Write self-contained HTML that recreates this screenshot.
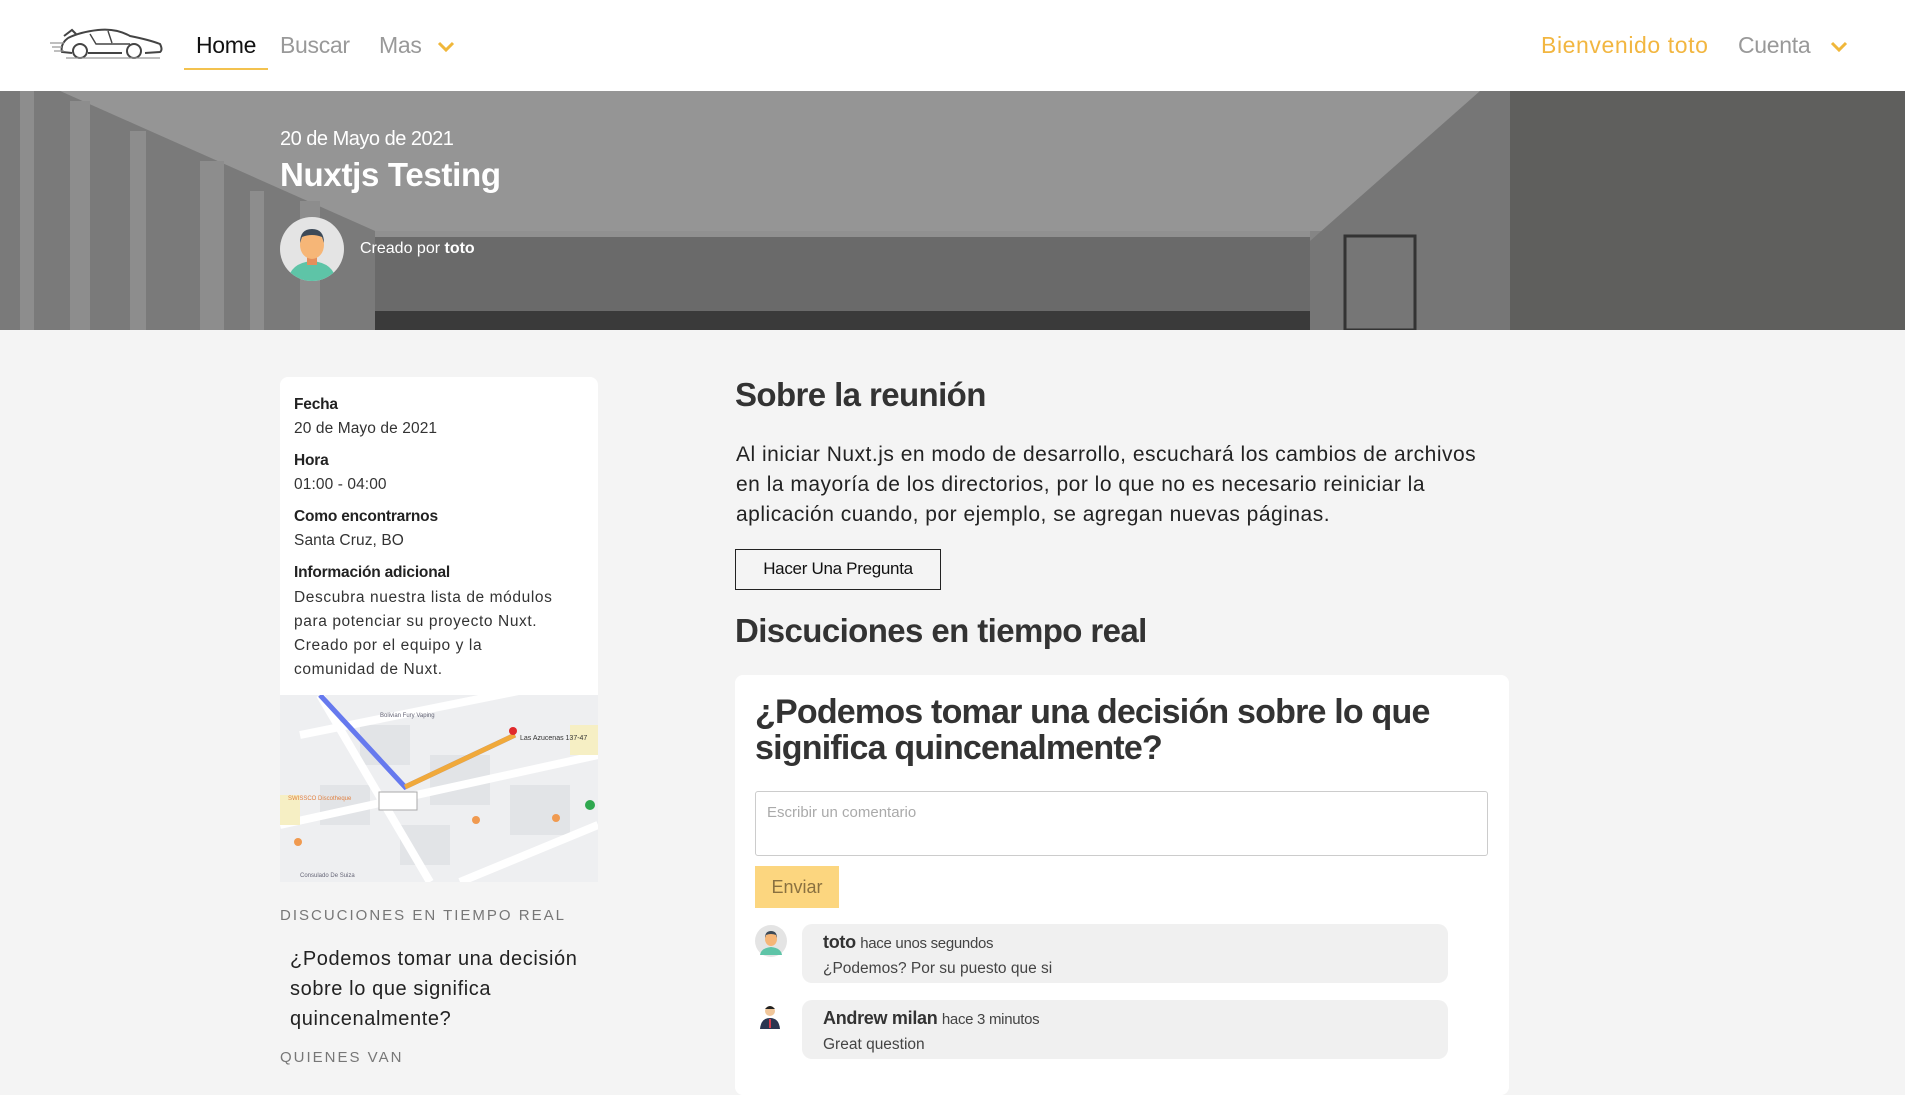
<!DOCTYPE html>
<html><head><meta charset="utf-8"><style>
*{margin:0;padding:0;box-sizing:border-box}
body{width:1905px;height:1079px;overflow:hidden;background:#f4f4f4;font-family:"Liberation Sans",sans-serif;color:#333;position:relative}
.a{position:absolute;white-space:nowrap}
header{position:absolute;left:0;top:0;width:1905px;height:91px;background:#fff}
.nav{font-size:23px;letter-spacing:-0.3px}
.card{position:absolute;background:#fff;border-radius:8px}
.lbl{font-size:15.5px;font-weight:bold;color:#222;letter-spacing:-0.2px}
.val{font-size:15.5px;color:#333;letter-spacing:0.1px}
.bub{position:absolute;background:#f0f0f0;border-radius:10px;left:802px;width:646px;height:59px}
</style></head><body>
<header>
<svg class="a" style="left:50px;top:26px" width="118" height="36" viewBox="0 0 118 36" fill="none" stroke="#444" stroke-width="2">
<path d="M14 10 L22 4 L26 8 M18 12 Q30 6 48 4 Q66 2 80 10 Q100 14 110 18 Q113 24 110 26 L95 27 M72 27 L38 27 M22 27 L12 26 Q10 18 18 12"/>
<circle cx="30" cy="25" r="7"/><circle cx="84" cy="25" r="7"/>
<path d="M40 8 L46 18 L80 18 M58 5 L62 17" stroke-width="1.4"/>
<path d="M0 17 H14 M2 21 H12 M4 25 H14 M16 32 H110" stroke="#999" stroke-width="1.2"/>
</svg>
<div class="a nav" style="left:196px;top:32px;color:#111">Home</div>
<div class="a" style="left:184px;top:68px;width:84px;height:2px;background:#f3c24f"></div>
<div class="a nav" style="left:280px;top:32px;color:#999">Buscar</div>
<div class="a nav" style="left:379px;top:32px;color:#999">Mas</div>
<svg class="a" style="left:436px;top:40px" width="20" height="14"><path d="M3 3 L10 10 L17 3" stroke="#f0b73a" stroke-width="3" fill="none"/></svg>
<div class="a nav" style="left:1541px;top:32px;color:#f2b640;letter-spacing:0.6px">Bienvenido toto</div>
<div class="a nav" style="left:1738px;top:32px;color:#999">Cuenta</div>
<svg class="a" style="left:1829px;top:40px" width="20" height="14"><path d="M3 3 L10 10 L17 3" stroke="#f0b73a" stroke-width="3" fill="none"/></svg>
</header>
<svg class="a" style="left:0;top:91px" width="1905" height="239" viewBox="0 0 1905 239">
<rect width="1905" height="239" fill="#858585"/>
<polygon points="60,0 1480,0 1330,140 375,140" fill="#959595"/>
<polygon points="375,140 1310,140 1310,220 375,220" fill="#6a6a6a"/>
<rect x="375" y="140" width="935" height="6" fill="#909090"/>
<rect x="375" y="220" width="935" height="19" fill="#3a3a3a"/>
<polygon points="1480,0 1510,0 1510,239 1310,239 1310,150" fill="#767676"/>
<rect x="1510" width="395" height="239" fill="#5f5f5d"/>
<polygon points="0,0 60,0 375,140 375,239 0,239" fill="#7a7a7a"/>
<g fill="#8d8d8d"><rect x="20" y="0" width="14" height="239"/><rect x="70" y="10" width="20" height="229"/><rect x="130" y="40" width="16" height="199"/><rect x="200" y="70" width="24" height="169"/><rect x="250" y="100" width="14" height="139"/><rect x="300" y="110" width="20" height="129"/></g>
<rect x="1345" y="145" width="70" height="94" fill="none" stroke="#333" stroke-width="3"/>
</svg>
<div class="a" style="left:280px;top:128px;font-size:20px;color:#fff;letter-spacing:-0.5px">20 de Mayo de 2021</div>
<div class="a" style="left:280px;top:156px;font-size:33px;font-weight:bold;color:#fff;letter-spacing:-0.3px">Nuxtjs Testing</div>
<svg class="a" style="left:280px;top:217px" width="64" height="64" viewBox="0 0 64 64">
<circle cx="32" cy="32" r="32" fill="#e4e4e4"/>
<clipPath id="c"><circle cx="32" cy="32" r="32"/></clipPath>
<g clip-path="url(#c)"><path d="M8 64 Q10 46 32 44 Q54 46 56 64Z" fill="#5ec4a7"/><rect x="27" y="38" width="10" height="10" fill="#e48f5b"/><ellipse cx="32" cy="28" rx="12" ry="14" fill="#f6b677"/><path d="M20 26 Q20 12 32 12 Q44 12 44 26 L42 20 Q32 16 22 20Z" fill="#3d4a58"/></g>
</svg>
<div class="a" style="left:360px;top:240px;font-size:16px;color:#fff">Creado por <b>toto</b></div>

<div class="card" style="left:280px;top:377px;width:318px;height:318px;border-radius:8px 8px 0 0"></div>
<div class="a lbl" style="left:294px;top:396px">Fecha</div>
<div class="a val" style="left:294px;top:420px">20 de Mayo de 2021</div>
<div class="a lbl" style="left:294px;top:452px">Hora</div>
<div class="a val" style="left:294px;top:476px">01:00 - 04:00</div>
<div class="a lbl" style="left:294px;top:508px">Como encontrarnos</div>
<div class="a val" style="left:294px;top:532px">Santa Cruz, BO</div>
<div class="a lbl" style="left:294px;top:564px">Información adicional</div>
<div class="a val" style="left:294px;top:586px;line-height:24px;letter-spacing:0.6px">Descubra nuestra lista de módulos<br>para potenciar su proyecto Nuxt.<br>Creado por el equipo y la<br>comunidad de Nuxt.</div>
<svg class="a" style="left:280px;top:695px" width="318" height="187" viewBox="0 0 318 187">
<rect width="318" height="187" fill="#eeeff1"/>
<g fill="#e2e4e7"><rect x="80" y="30" width="50" height="40"/><rect x="150" y="60" width="60" height="50"/><rect x="230" y="90" width="60" height="50"/><rect x="40" y="90" width="50" height="40"/><rect x="120" y="130" width="50" height="40"/></g>
<path d="M20 40 L318 -20 M0 130 L318 60 M40 0 L150 187 M180 187 L318 130" stroke="#fff" stroke-width="8"/>
<rect x="0" y="100" width="20" height="30" fill="#f6efc4"/><rect x="290" y="30" width="28" height="30" fill="#f6efc4"/>
<path d="M40 0 L125 92 L235 40" stroke="#6679ee" stroke-width="5" fill="none"/>
<path d="M125 92 L235 40" stroke="#f0a93b" stroke-width="5" fill="none"/>
<circle cx="233" cy="36" r="4" fill="#e0292c"/>
<rect x="99" y="97" width="38" height="18" fill="#fff" stroke="#aaa"/>
<text x="240" y="45" font-size="7" font-family="Liberation Sans" fill="#333">Las Azucenas 137-47</text>
<text x="100" y="22" font-size="6" font-family="Liberation Sans" fill="#667">Bolivian Fury Vaping</text>
<text x="8" y="105" font-size="6" font-family="Liberation Sans" fill="#e08040">SWISSCO Discotheque</text>
<text x="20" y="182" font-size="6" font-family="Liberation Sans" fill="#667">Consulado De Suiza</text>
<circle cx="310" cy="110" r="5" fill="#2fa84f"/><circle cx="196" cy="125" r="4" fill="#f09a50"/><circle cx="276" cy="123" r="4" fill="#f09a50"/><circle cx="18" cy="147" r="4" fill="#f09a50"/>
</svg>
<div class="a" style="left:280px;top:907px;font-size:15px;color:#777;letter-spacing:2px">DISCUCIONES EN TIEMPO REAL</div>
<div class="a" style="left:290px;top:944px;font-size:20px;color:#222;line-height:30px;letter-spacing:0.6px">¿Podemos tomar una decisión<br>sobre lo que significa<br>quincenalmente?</div>
<div class="a" style="left:280px;top:1049px;font-size:15px;color:#777;letter-spacing:2px">QUIENES VAN</div>

<div class="a" style="left:735px;top:376px;font-size:33px;font-weight:bold;color:#333;letter-spacing:-0.6px">Sobre la reunión</div>
<div class="a" style="left:736px;top:440px;font-size:21px;color:#222;line-height:30px;letter-spacing:0.5px">Al iniciar Nuxt.js en modo de desarrollo, escuchará los cambios de archivos<br>en la mayoría de los directorios, por lo que no es necesario reiniciar la<br>aplicación cuando, por ejemplo, se agregan nuevas páginas.</div>
<div class="a" style="left:735px;top:549px;width:206px;height:41px;border:1.5px solid #222;font-size:17px;color:#111;text-align:center;line-height:38px;letter-spacing:-0.3px">Hacer Una Pregunta</div>
<div class="a" style="left:735px;top:612px;font-size:33px;font-weight:bold;color:#333;letter-spacing:-0.6px">Discuciones en tiempo real</div>
<div class="card" style="left:735px;top:675px;width:774px;height:420px"></div>
<div class="a" style="left:755px;top:694px;font-size:34px;font-weight:bold;color:#333;line-height:36px;letter-spacing:-0.8px">¿Podemos tomar una decisión sobre lo que<br>significa quincenalmente?</div>
<div class="a" style="left:755px;top:791px;width:733px;height:65px;border:1px solid #ccc;border-radius:3px;background:#fff"></div>
<div class="a" style="left:767px;top:804px;font-size:15px;color:#aaa">Escribir un comentario</div>
<div class="a" style="left:755px;top:866px;width:84px;height:42px;background:#fcd67f;color:#8a7140;font-size:18px;text-align:center;line-height:42px">Enviar</div>
<svg class="a" style="left:755px;top:925px" width="32" height="32" viewBox="0 0 64 64"><circle cx="32" cy="32" r="32" fill="#e4e4e4"/><path d="M10 60 Q12 46 32 44 Q52 46 54 60Z" fill="#5ec4a7"/><ellipse cx="32" cy="28" rx="12" ry="14" fill="#f6b677"/><path d="M20 26 Q20 12 32 12 Q44 12 44 26 L42 20 Q32 16 22 20Z" fill="#3d4a58"/></svg>
<div class="bub" style="top:924px"></div>
<div class="a" style="left:823px;top:932px;font-size:17px;color:#444;letter-spacing:-0.3px"><b style="color:#333;font-size:18px">toto</b> <span style="font-size:15px">hace unos segundos</span></div>
<div class="a" style="left:823px;top:960px;font-size:15.5px;color:#444">¿Podemos? Por su puesto que si</div>
<svg class="a" style="left:758px;top:1004px" width="24" height="26" viewBox="0 0 24 26"><circle cx="12" cy="7" r="5" fill="#f1c79b"/><path d="M7 5 Q12 -1 17 5Z" fill="#222"/><path d="M2 25 Q3 14 12 14 Q21 14 22 25Z" fill="#2a3550"/><rect x="11" y="15" width="2" height="9" fill="#d63a4a"/></svg>
<div class="bub" style="top:1000px"></div>
<div class="a" style="left:823px;top:1008px;font-size:17px;color:#444;letter-spacing:-0.3px"><b style="color:#333;font-size:18px">Andrew milan</b> <span style="font-size:15px">hace 3 minutos</span></div>
<div class="a" style="left:823px;top:1036px;font-size:15.5px;color:#444">Great question</div>
</body></html>
